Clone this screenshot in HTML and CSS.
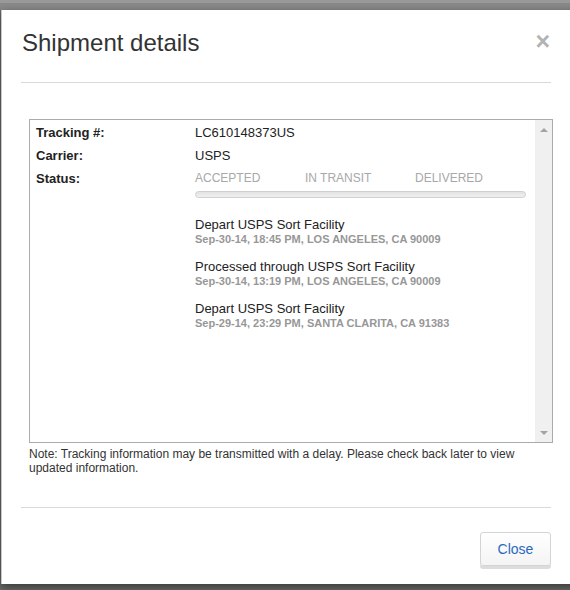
FILE: index.html
```html
<!DOCTYPE html>
<html lang="en">
<head>
<meta charset="utf-8">
<title>Shipment details</title>
<link rel="stylesheet" href="styles.css">
</head>
<body>
<div class="backdrop-top"></div>
<div class="modal">
  <div class="modal-header">
    <h2 class="modal-title">Shipment details</h2>
    <span class="close-x">×</span>
  </div>
  <div class="modal-body">
    <div class="track-box">
      <div class="track-content">
        <div class="info-grid">
          <div class="lbl">Tracking #:</div>
          <div class="val">LC610148373US</div>
          <div class="lbl">Carrier:</div>
          <div class="val">USPS</div>
          <div class="lbl">Status:</div>
          <div class="val">
            <div class="stages">
              <span>ACCEPTED</span>
              <span>IN TRANSIT</span>
              <span>DELIVERED</span>
            </div>
            <div class="progress"></div>
            <div class="events">
              <div class="event">
                <div class="ev-title">Depart USPS Sort Facility</div>
                <div class="ev-sub">Sep-30-14, 18:45 PM, LOS ANGELES, CA 90009</div>
              </div>
              <div class="event">
                <div class="ev-title">Processed through USPS Sort Facility</div>
                <div class="ev-sub">Sep-30-14, 13:19 PM, LOS ANGELES, CA 90009</div>
              </div>
              <div class="event">
                <div class="ev-title">Depart USPS Sort Facility</div>
                <div class="ev-sub">Sep-29-14, 23:29 PM, SANTA CLARITA, CA 91383</div>
              </div>
            </div>
          </div>
        </div>
      </div>
      <div class="scrollbar">
        <span class="arrow-up"></span>
        <span class="arrow-down"></span>
      </div>
    </div>
    <p class="note">Note: Tracking information may be transmitted with a delay. Please check back later to view updated information.</p>
  </div>
  <div class="modal-footer">
    <button class="btn-close" type="button">Close</button>
  </div>
</div>
</body>
</html>
```
FILE: styles.css
```css
html, body {
  margin: 0;
  padding: 0;
}
body {
  width: 570px;
  height: 590px;
  overflow: hidden;
  background: #6b6b6b;
  font-family: "Liberation Sans", Arial, sans-serif;
  color: #333;
}
.backdrop-top {
  height: 10px;
  background: linear-gradient(#9a9a9a 0, #9a9a9a 3px, #8a8a8a 3px, #8a8a8a 100%);
}
.modal {
  margin-left: 1px;
  width: 590px;
  height: 574px;
  background: #fff;
  border-left: 1px solid #c8c8c8;
  box-shadow: 0 3px 9px rgba(0, 0, 0, 0.5);
  box-sizing: border-box;
}
.modal-header {
  margin: 0 19px 0 19px;
  width: 530px;
  padding-top: 20px;
  height: 52px;
  border-bottom: 1px solid #d9d9d9;
  display: flex;
  justify-content: space-between;
  align-items: flex-start;
}
.modal-title {
  margin: 0 0 0 1px;
  font-size: 24px;
  line-height: 26px;
  font-weight: normal;
  color: #333;
}
.close-x {
  font-size: 25px;
  line-height: 20px;
  font-weight: bold;
  color: #b3b3b3;
  margin-top: 1px;
  margin-right: 1px;
}
.modal-body {
  padding: 36px 0 0 27px;
}
.track-box {
  width: 522px;
  height: 322px;
  border: 1px solid #ababab;
  display: flex;
}
.track-content {
  flex: 1;
  padding: 1px 9px 0 6px;
}
.info-grid {
  display: grid;
  grid-template-columns: 159px 1fr;
  font-size: 13px;
  line-height: 23px;
}
.lbl {
  font-weight: bold;
  color: #222;
}
.val {
  color: #222;
}
.stages {
  display: grid;
  grid-template-columns: 110px 110px 110px;
  font-size: 12px;
  color: #a8a8a8;
}
.progress {
  margin-top: 1px;
  height: 5px;
  border: 1px solid #cfcfcf;
  border-radius: 4px;
  background: linear-gradient(#e2e2e2, #f0f0f0);
}
.events {
  margin-top: 19px;
}
.event {
  margin-bottom: 13px;
}
.ev-title {
  font-size: 13px;
  line-height: 16px;
  color: #222;
}
.ev-sub {
  font-size: 11px;
  line-height: 13px;
  font-weight: bold;
  color: #979797;
}
.scrollbar {
  width: 17px;
  background: #f0f0f0;
  display: flex;
  flex-direction: column;
  justify-content: space-between;
  align-items: center;
  padding: 8px 0 7px;
  box-sizing: border-box;
}
.arrow-up, .arrow-down {
  width: 0;
  height: 0;
  border-left: 4px solid transparent;
  border-right: 4px solid transparent;
}
.arrow-up {
  border-bottom: 4px solid #a3a3a3;
}
.arrow-down {
  border-top: 4px solid #a3a3a3;
}
.note {
  margin: 4px 0 0 0;
  width: 500px;
  font-size: 12px;
  line-height: 14px;
  color: #333;
}
.modal-footer {
  margin: 32px 0 0 19px;
  width: 530px;
  border-top: 1px solid #d9d9d9;
  padding-top: 24px;
  display: flex;
  justify-content: flex-end;
}
.btn-close {
  width: 71px;
  height: 34px;
  font-family: "Liberation Sans", Arial, sans-serif;
  font-size: 14px;
  color: #2a69bf;
  background: linear-gradient(#ffffff, #f4f4f4);
  border: 1px solid #d4d4d4;
  border-radius: 3px;
  box-shadow: 0 3px 0 #dcdcdc;
  padding: 0;
}
```
